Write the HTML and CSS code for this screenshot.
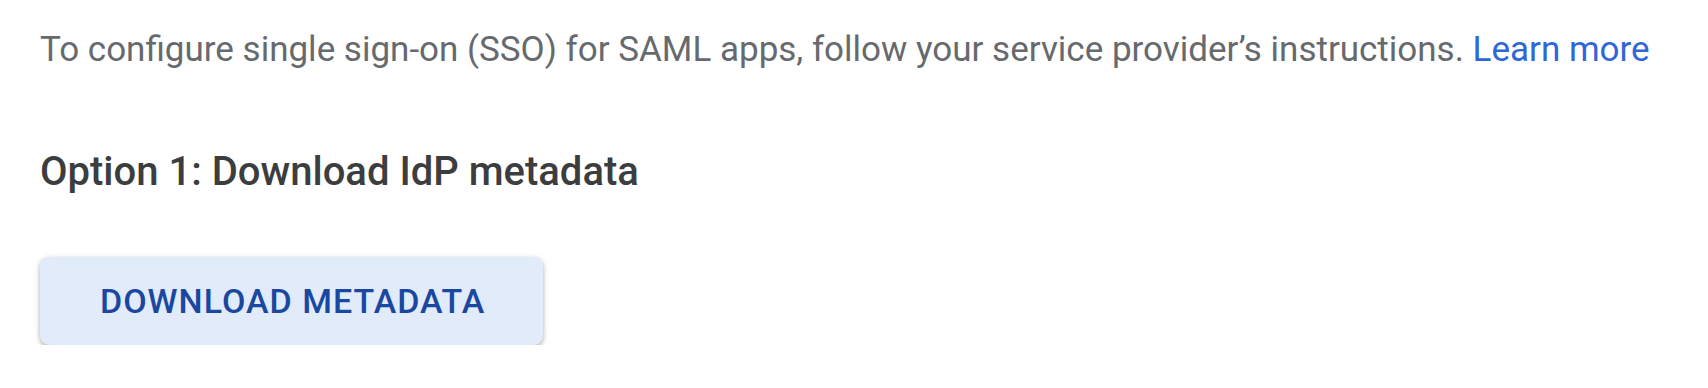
FILE: index.html
```html
<!DOCTYPE html>
<html lang="en">
<head>
<meta charset="utf-8">
<title>SAML SSO</title>
<link rel="stylesheet" href="styles.css">
</head>
<body>
<main class="page">
  <p class="intro">To configure single sign-on (SSO) for SAML apps, follow your service provider’s instructions. <a class="link" href="#">Learn more</a></p>
  <h2 class="option-title">Option 1: Download IdP metadata</h2>
  <button class="btn-download" type="button">DOWNLOAD METADATA</button>
</main>
</body>
</html>
```
FILE: styles.css
```css
html, body {
  margin: 0;
  padding: 0;
  background: #ffffff;
}

.page {
  display: flex;
  flex-direction: column;
  align-items: flex-start;
  padding: 30px 0 0 40px;
  font-family: Roboto, "Noto Sans", sans-serif;
}

.intro {
  margin: 0;
  font-size: 35px;
  line-height: 40px;
  color: #666a6e;
  font-weight: 400;
}

.link {
  color: #2f66d8;
  text-decoration: none;
}

.option-title {
  margin: 80px 0 0 0;
  font-size: 40px;
  line-height: 44px;
  font-weight: 500;
  color: #3c3d3f;
}

.btn-download {
  margin-top: 63px;
  height: 88px;
  padding: 0 58px 0 60px;
  border: none;
  border-radius: 9px;
  background: #e2ebfa;
  color: #1a47a0;
  font-family: Roboto, "Noto Sans", sans-serif;
  font-size: 34px;
  font-weight: 500;
  letter-spacing: 1px;
  box-shadow: 0 2px 4px rgba(0, 0, 0, 0.28), 0 1px 8px rgba(0, 0, 0, 0.08);
  cursor: pointer;
}
```
